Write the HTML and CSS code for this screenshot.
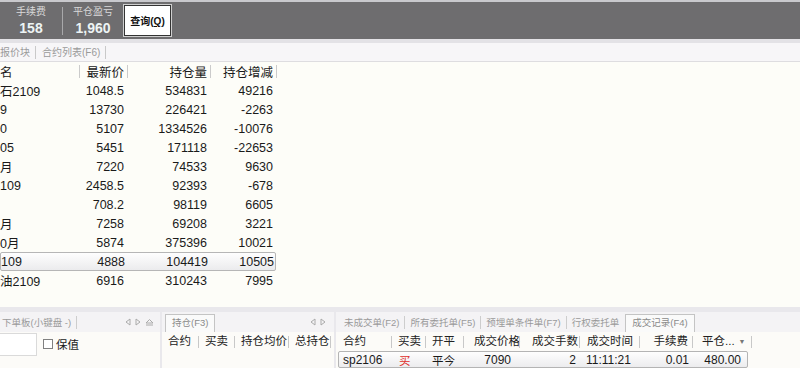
FILE: index.html
```html
<!DOCTYPE html>
<html lang="zh-CN">
<head>
    <meta charset="UTF-8">
    <title>交易终端</title>
    <link rel="stylesheet" href="styles.css">
</head>
<body>
    <div class="topbar">
        <div class="stat stat-fee">
            <span class="stat-label">手续费</span>
            <span class="stat-value">158</span>
        </div>
        <div class="divider"></div>
        <div class="stat stat-pnl">
            <span class="stat-label">平仓盈亏</span>
            <span class="stat-value">1,960</span>
        </div>
        <button class="query">查询(<u>Q</u>)</button>
    </div>

    <div class="tabstrip">
        <span class="tab tab-first">报价块</span>
        <span class="tab">合约列表(F6)</span>
    </div>

    <div class="quotes">
        <div class="qrow qhead">
            <span class="qname">名</span>
            <span>最新价</span>
            <span>持仓量</span>
            <span>持仓增减</span>
        </div>
        <div class="qrow"><span class="qname">石2109</span><span>1048.5</span><span>534831</span><span>49216</span></div>
        <div class="qrow"><span class="qname">9</span><span>13730</span><span>226421</span><span>-2263</span></div>
        <div class="qrow"><span class="qname">0</span><span>5107</span><span>1334526</span><span>-10076</span></div>
        <div class="qrow"><span class="qname">05</span><span>5451</span><span>171118</span><span>-22653</span></div>
        <div class="qrow"><span class="qname">月</span><span>7220</span><span>74533</span><span>9630</span></div>
        <div class="qrow"><span class="qname">109</span><span>2458.5</span><span>92393</span><span>-678</span></div>
        <div class="qrow"><span class="qname"></span><span>708.2</span><span>98119</span><span>6605</span></div>
        <div class="qrow"><span class="qname">月</span><span>7258</span><span>69208</span><span>3221</span></div>
        <div class="qrow"><span class="qname">0月</span><span>5874</span><span>375396</span><span>10021</span></div>
        <div class="qrow sel"><span class="qname">109</span><span>4888</span><span>104419</span><span>10505</span></div>
        <div class="qrow"><span class="qname">油2109</span><span>6916</span><span>310243</span><span>7995</span></div>
    </div>

    <div class="bottom">
        <div class="panel panel-order">
            <div class="ptabs">
                <span class="ptab ptab-first">下单板(小键盘 -)</span>
                <span class="arrows">
                    <svg width="6" height="8" viewBox="0 0 6 8"><path d="M5 1 L1 4 L5 7 Z" fill="none" stroke="#aaa"/></svg>
                    <svg width="6" height="8" viewBox="0 0 6 8"><path d="M1 1 L5 4 L1 7 Z" fill="none" stroke="#aaa"/></svg>
                    <svg width="9" height="8" viewBox="0 0 9 8"><path d="M1 5 L4.5 1.5 L8 5 Z M1 7 H8" fill="none" stroke="#aaa"/></svg>
                </span>
            </div>
            <div class="order-body">
                <div class="input"></div>
                <label class="check"><span class="box"></span>保值</label>
            </div>
        </div>

        <div class="panel panel-pos">
            <div class="ptabs">
                <span class="ptab active">持仓(F3)</span>
                <span class="arrows arrows-pos">
                    <svg width="6" height="8" viewBox="0 0 6 8"><path d="M5 1 L1 4 L5 7 Z" fill="none" stroke="#aaa"/></svg>
                    <svg width="6" height="8" viewBox="0 0 6 8"><path d="M1 1 L5 4 L1 7 Z" fill="none" stroke="#aaa"/></svg>
                </span>
            </div>
            <div class="phead pos-grid">
                <span>合约</span>
                <span>买卖</span>
                <span>持仓均价</span>
                <span>总持仓</span>
            </div>
        </div>

        <div class="panel panel-trade">
            <div class="ptabs trade-tabs">
                <span class="ptab">未成交单(F2)</span>
                <span class="ptab">所有委托单(F5)</span>
                <span class="ptab">预埋单条件单(F7)</span>
                <span class="ptab last">行权委托单</span>
                <span class="ptab active">成交记录(F4)</span>
            </div>
            <div class="phead trade-grid">
                <span class="c-code">合约</span>
                <span class="c-side">买卖</span>
                <span class="c-oc">开平</span>
                <span class="c-price">成交价格</span>
                <span class="c-qty">成交手数</span>
                <span class="c-time">成交时间</span>
                <span class="c-fee">手续费</span>
                <span class="c-pnl">平仓...<i class="drop">▼</i></span>
            </div>
            <div class="trow trade-grid row-grid">
                <span class="c-code">sp2106</span>
                <span class="c-side buy">买</span>
                <span class="c-oc">平今</span>
                <span class="c-price">7090</span>
                <span class="c-qty">2</span>
                <span class="c-time">11:11:21</span>
                <span class="c-fee">0.01</span>
                <span class="c-pnl">480.00</span>
            </div>
        </div>
    </div>
</body>
</html>
```

FILE: styles.css
```css
* {
    box-sizing: border-box;
}

body {
    margin: 0;
    width: 800px;
    height: 368px;
    overflow: hidden;
    background-color: #fdfdf8;
    color: #1a1a1a;
    font-family: "Liberation Sans", "Noto Sans CJK SC", sans-serif;
}

/* top account bar */
.topbar {
    height: 43px;
    border-top: 2px solid #c9c9cd;
    border-bottom: 4px solid #e3e2e6;
    background-color: #6e6d6f;
    display: flex;
    align-items: center;
    padding-left: 12px;
}

.stat {
    display: flex;
    flex-direction: column;
    align-items: center;
}

.stat-label {
    font-size: 10px;
    line-height: 12px;
    color: #dadada;
}

.stat-value {
    margin-top: 2px;
    font-size: 14px;
    line-height: 16px;
    font-weight: bold;
    color: #edf4f4;
}

.stat-fee {
    width: 38px;
}

.stat-pnl {
    width: 40px;
}

.divider {
    width: 1px;
    height: 28px;
    background-color: #a8a8aa;
    margin: 0 10px 0 12px;
}

.query {
    margin-left: 11px;
    width: 47px;
    height: 31px;
    padding: 0;
    background-color: #fff;
    border: 1px solid #333;
    outline: 1px solid #cfcfcf;
    font-family: "Liberation Sans", "Noto Sans CJK SC", sans-serif;
    font-size: 10px;
    font-weight: bold;
    color: #111;
}

/* quote tabs */
.tabstrip {
    height: 19px;
    background-color: #f7f6f8;
    border-bottom: 1px solid #dedde0;
    display: flex;
    align-items: center;
    font-size: 10px;
    color: #9a9a9a;
}

.tab {
    padding: 0 5px 0 6px;
    line-height: 13px;
    border-right: 1px solid #c9c9c9;
}

.tab-first {
    padding-left: 0;
}

/* quote table */
.quotes {
    height: 245px;
}

.qrow {
    display: grid;
    grid-template-columns: 80px 48px 83px 66px;
    height: 19px;
    align-items: center;
    font-size: 12.5px;
    width: 277px;
}

.qrow span {
    text-align: right;
    padding-right: 4px;
    white-space: nowrap;
}

.qrow .qname {
    text-align: left;
    padding: 0;
}

.qhead span {
    position: relative;
    font-size: 12.5px;
}

.qhead span::after {
    content: '';
    position: absolute;
    right: 0;
    top: 3px;
    width: 1px;
    height: 13px;
    background-color: #cbcbcb;
}

.qrow.sel {
    width: 276px;
    border: 1px solid #b6b6b6;
    border-radius: 2px;
    background: linear-gradient(#fefefe, #ebebed);
}

/* bottom panels */
.bottom {
    height: 61px;
    border-top: 5px solid #e9e8ec;
    background-color: #e9e8ec;
    display: flex;
    gap: 2px;
}

.panel {
    background-color: #fcfbf8;
    display: flex;
    flex-direction: column;
}

.panel-order {
    width: 160px;
}

.panel-pos {
    width: 172px;
}

.panel-trade {
    flex: 1;
}

.ptabs {
    height: 20px;
    background-color: #f4f3f5;
    display: flex;
    align-items: center;
    font-size: 9.5px;
    color: #9a9a9a;
    white-space: nowrap;
}

.ptab {
    padding: 0 5px;
    line-height: 13px;
    border-right: 1px solid #cdcdcd;
}

.ptab-first {
    padding-left: 2px;
}

.ptab.active {
    margin-left: 3px;
    height: 18px;
    margin-top: 2px;
    line-height: 16px;
    border: 1px solid #c4c4c4;
    border-bottom: none;
    background-color: #fafafa;
    color: #8a8a8a;
    padding: 0 6px;
}

.ptab.last {
    border-right: none;
}

.trade-tabs {
    padding-left: 3px;
}

.trade-tabs .ptab.active {
    margin-left: 1px;
}

.arrows {
    margin-left: auto;
    margin-right: 6px;
    display: flex;
    gap: 4px;
    align-items: center;
}

.arrows-pos {
    margin-right: 8px;
}

.order-body {
    display: flex;
    align-items: flex-start;
    padding-top: 1px;
}

.input {
    width: 37px;
    height: 23px;
    background-color: #fff;
    border: 1px solid #dadada;
    border-left: none;
}

.check {
    margin-left: 6px;
    margin-top: 3px;
    display: flex;
    align-items: center;
    gap: 3px;
    font-size: 11.5px;
}

.check .box {
    width: 10px;
    height: 10px;
    border: 1px solid #808080;
    background-color: #fff;
}

.phead {
    height: 19px;
    align-items: center;
    font-size: 11.5px;
    color: #222;
}

.phead span {
    position: relative;
    height: 19px;
    line-height: 19px;
    white-space: nowrap;
}

.phead span::after {
    content: '';
    position: absolute;
    right: 0;
    top: 4px;
    width: 1px;
    height: 12px;
    background-color: #c8c8c8;
}

.pos-grid {
    display: grid;
    grid-template-columns: 37px 36px 54px 42px;
}

.pos-grid span {
    padding-left: 6px;
}

.trade-grid {
    display: grid;
    grid-template-columns: 54px 34px 38px 56px 60px 60px 53px 59px;
    margin-left: 2px;
}

.trade-grid.row-grid {
    grid-template-columns: 53px 34px 38px 56px 60px 60px 53px 54px;
}

.phead .c-code { padding-left: 5px; }
.phead .c-side { padding-left: 6px; }
.phead .c-oc { padding-left: 6px; }
.phead .c-price { padding-left: 10px; }
.phead .c-qty { padding-left: 12px; }
.phead .c-time { padding-left: 7px; }
.phead .c-fee { text-align: right; padding-right: 5px; }
.phead .c-pnl { padding-left: 9px; }

.drop {
    font-style: normal;
    font-size: 7px;
    color: #777;
    margin-left: 4px;
    vertical-align: 1px;
}

.trow {
    width: 410px;
    height: 17px;
    align-items: center;
    border: 1px solid #b4b4b4;
    border-radius: 2px;
    background: linear-gradient(#fefefe, #ececee);
    font-size: 12px;
}

.trow span {
    white-space: nowrap;
}

.trow .c-code { padding-left: 4px; }
.trow .c-side { padding-left: 7px; }
.trow .c-oc { padding-left: 6px; font-size: 11.5px; }
.trow .c-price { text-align: right; padding-right: 9px; }
.trow .c-qty { text-align: right; padding-right: 4px; }
.trow .c-time { padding-left: 6px; }
.trow .c-fee { text-align: right; padding-right: 4px; }
.trow .c-pnl { text-align: right; padding-right: 6px; }

.buy {
    color: #e0302c;
    font-size: 11.5px;
}
```
